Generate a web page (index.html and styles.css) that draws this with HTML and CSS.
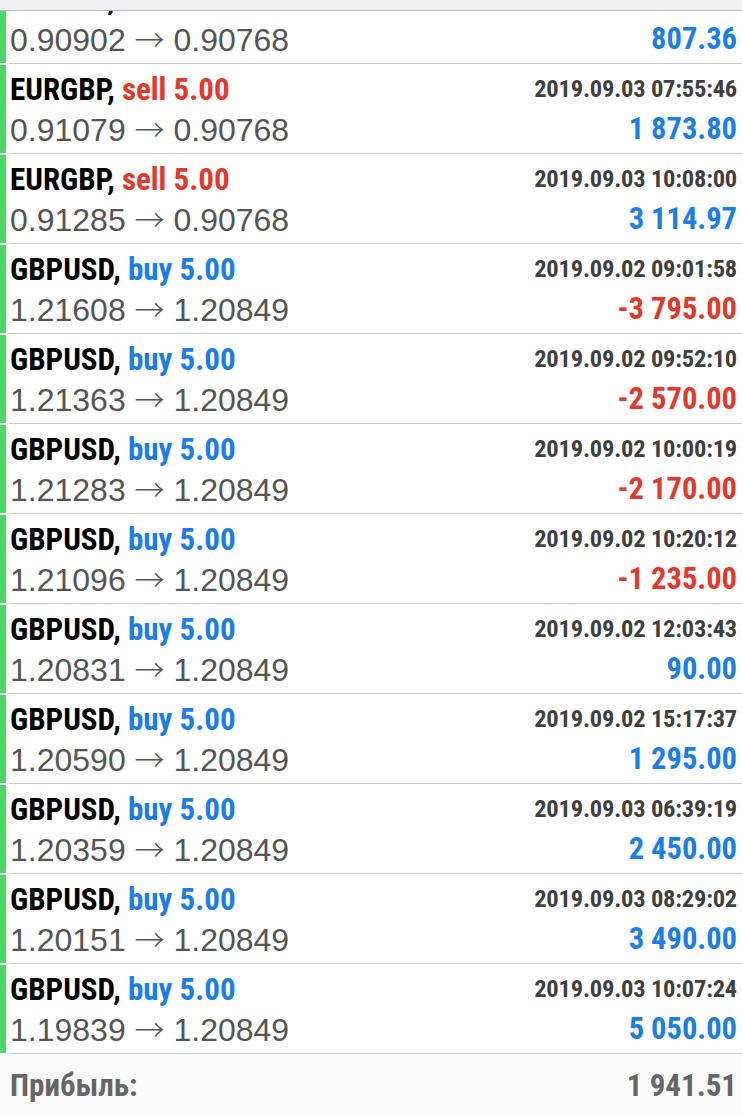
FILE: index.html
```html
<!DOCTYPE html>
<html lang="ru">
<head>
<meta charset="utf-8">
<title>История</title>
<link rel="stylesheet" href="styles.css">
</head>
<body>
<div class="topbar"></div>
<div class="list">
  <div class="row">
    <div class="bar"></div>
    <div class="content">
      <div class="line1"><span class="title">EURGBP, <span class="sell">sell 5.00</span></span><span class="date">2019.09.03 07:30:00</span></div>
      <div class="line2"><span class="price">0.90902 <span class="arrow">→</span> 0.90768</span><span class="amount pos">807.36</span></div>
    </div>
  </div>
  <div class="row">
    <div class="bar"></div>
    <div class="content">
      <div class="line1"><span class="title">EURGBP, <span class="sell">sell 5.00</span></span><span class="date">2019.09.03 07:55:46</span></div>
      <div class="line2"><span class="price">0.91079 <span class="arrow">→</span> 0.90768</span><span class="amount pos">1 873.80</span></div>
    </div>
  </div>
  <div class="row">
    <div class="bar"></div>
    <div class="content">
      <div class="line1"><span class="title">EURGBP, <span class="sell">sell 5.00</span></span><span class="date">2019.09.03 10:08:00</span></div>
      <div class="line2"><span class="price">0.91285 <span class="arrow">→</span> 0.90768</span><span class="amount pos">3 114.97</span></div>
    </div>
  </div>
  <div class="row">
    <div class="bar"></div>
    <div class="content">
      <div class="line1"><span class="title">GBPUSD, <span class="buy">buy 5.00</span></span><span class="date">2019.09.02 09:01:58</span></div>
      <div class="line2"><span class="price">1.21608 <span class="arrow">→</span> 1.20849</span><span class="amount neg">-3 795.00</span></div>
    </div>
  </div>
  <div class="row">
    <div class="bar"></div>
    <div class="content">
      <div class="line1"><span class="title">GBPUSD, <span class="buy">buy 5.00</span></span><span class="date">2019.09.02 09:52:10</span></div>
      <div class="line2"><span class="price">1.21363 <span class="arrow">→</span> 1.20849</span><span class="amount neg">-2 570.00</span></div>
    </div>
  </div>
  <div class="row">
    <div class="bar"></div>
    <div class="content">
      <div class="line1"><span class="title">GBPUSD, <span class="buy">buy 5.00</span></span><span class="date">2019.09.02 10:00:19</span></div>
      <div class="line2"><span class="price">1.21283 <span class="arrow">→</span> 1.20849</span><span class="amount neg">-2 170.00</span></div>
    </div>
  </div>
  <div class="row">
    <div class="bar"></div>
    <div class="content">
      <div class="line1"><span class="title">GBPUSD, <span class="buy">buy 5.00</span></span><span class="date">2019.09.02 10:20:12</span></div>
      <div class="line2"><span class="price">1.21096 <span class="arrow">→</span> 1.20849</span><span class="amount neg">-1 235.00</span></div>
    </div>
  </div>
  <div class="row">
    <div class="bar"></div>
    <div class="content">
      <div class="line1"><span class="title">GBPUSD, <span class="buy">buy 5.00</span></span><span class="date">2019.09.02 12:03:43</span></div>
      <div class="line2"><span class="price">1.20831 <span class="arrow">→</span> 1.20849</span><span class="amount pos">90.00</span></div>
    </div>
  </div>
  <div class="row">
    <div class="bar"></div>
    <div class="content">
      <div class="line1"><span class="title">GBPUSD, <span class="buy">buy 5.00</span></span><span class="date">2019.09.02 15:17:37</span></div>
      <div class="line2"><span class="price">1.20590 <span class="arrow">→</span> 1.20849</span><span class="amount pos">1 295.00</span></div>
    </div>
  </div>
  <div class="row">
    <div class="bar"></div>
    <div class="content">
      <div class="line1"><span class="title">GBPUSD, <span class="buy">buy 5.00</span></span><span class="date">2019.09.03 06:39:19</span></div>
      <div class="line2"><span class="price">1.20359 <span class="arrow">→</span> 1.20849</span><span class="amount pos">2 450.00</span></div>
    </div>
  </div>
  <div class="row">
    <div class="bar"></div>
    <div class="content">
      <div class="line1"><span class="title">GBPUSD, <span class="buy">buy 5.00</span></span><span class="date">2019.09.03 08:29:02</span></div>
      <div class="line2"><span class="price">1.20151 <span class="arrow">→</span> 1.20849</span><span class="amount pos">3 490.00</span></div>
    </div>
  </div>
  <div class="row">
    <div class="bar"></div>
    <div class="content">
      <div class="line1"><span class="title">GBPUSD, <span class="buy">buy 5.00</span></span><span class="date">2019.09.03 10:07:24</span></div>
      <div class="line2"><span class="price">1.19839 <span class="arrow">→</span> 1.20849</span><span class="amount pos">5 050.00</span></div>
    </div>
  </div>
</div>
<div class="footer">
  <span class="footer-label">Прибыль:</span>
  <span class="footer-value">1 941.51</span>
</div>
</body>
</html>
```

FILE: styles.css
```css
html, body {
  margin: 0;
  padding: 0;
  background: #ffffff;
}

body {
  width: 742px;
  height: 1116px;
  overflow: hidden;
  position: relative;
  font-family: "Liberation Sans", Arial, sans-serif;
}

.topbar {
  position: absolute;
  top: 0;
  left: 0;
  right: 0;
  height: 10px;
  background: #f0eff1;
  border-bottom: 1px solid #b5b5b8;
  z-index: 2;
}

.list {
  margin-top: -26px;
}

.row {
  display: flex;
  height: 90px;
}

.bar {
  width: 6px;
  height: 88px;
  margin-top: 1px;
  background: #4cd964;
  flex: none;
}

.content {
  flex: 1;
  margin-left: 3px;
  padding: 8px 5px 0 1px;
  border-bottom: 1px solid #c8c7cc;
  display: flex;
  flex-direction: column;
}

.line1, .line2 {
  display: flex;
  justify-content: space-between;
  align-items: center;
  line-height: 1;
}

.line1 {
  height: 34px;
}

.line2 {
  height: 40px;
  margin-top: 3px;
}

.title, .date, .amount, .footer-label, .footer-value {
  font-family: "Roboto Condensed", "Liberation Sans Narrow", "DejaVu Sans Condensed", Roboto, sans-serif;
  font-stretch: condensed;
  font-weight: 700;
}

.title {
  font-size: 31px;
  color: #000000;
}

.sell {
  color: #e2392c;
}

.buy {
  color: #1a7ee8;
}

.date {
  font-size: 24.5px;
  letter-spacing: -0.2px;
  color: #3f3f3f;
}

.price {
  font-size: 32px;
  color: #555555;
  white-space: nowrap;
}

.arrow {
  font-family: "Noto Sans CJK SC", "DejaVu Sans", sans-serif;
  font-weight: 300;
  font-size: 30px;
  line-height: 1;
}

.amount {
  font-size: 30.5px;
}

.pos {
  color: #1a7ee8;
}

.neg {
  color: #e2392c;
}

.footer {
  display: flex;
  justify-content: space-between;
  align-items: center;
  height: 62px;
  padding: 0 5px 0 10px;
  background: #fbfbfb;
}

.footer-label, .footer-value {
  font-size: 31px;
  color: #666666;
}
```
